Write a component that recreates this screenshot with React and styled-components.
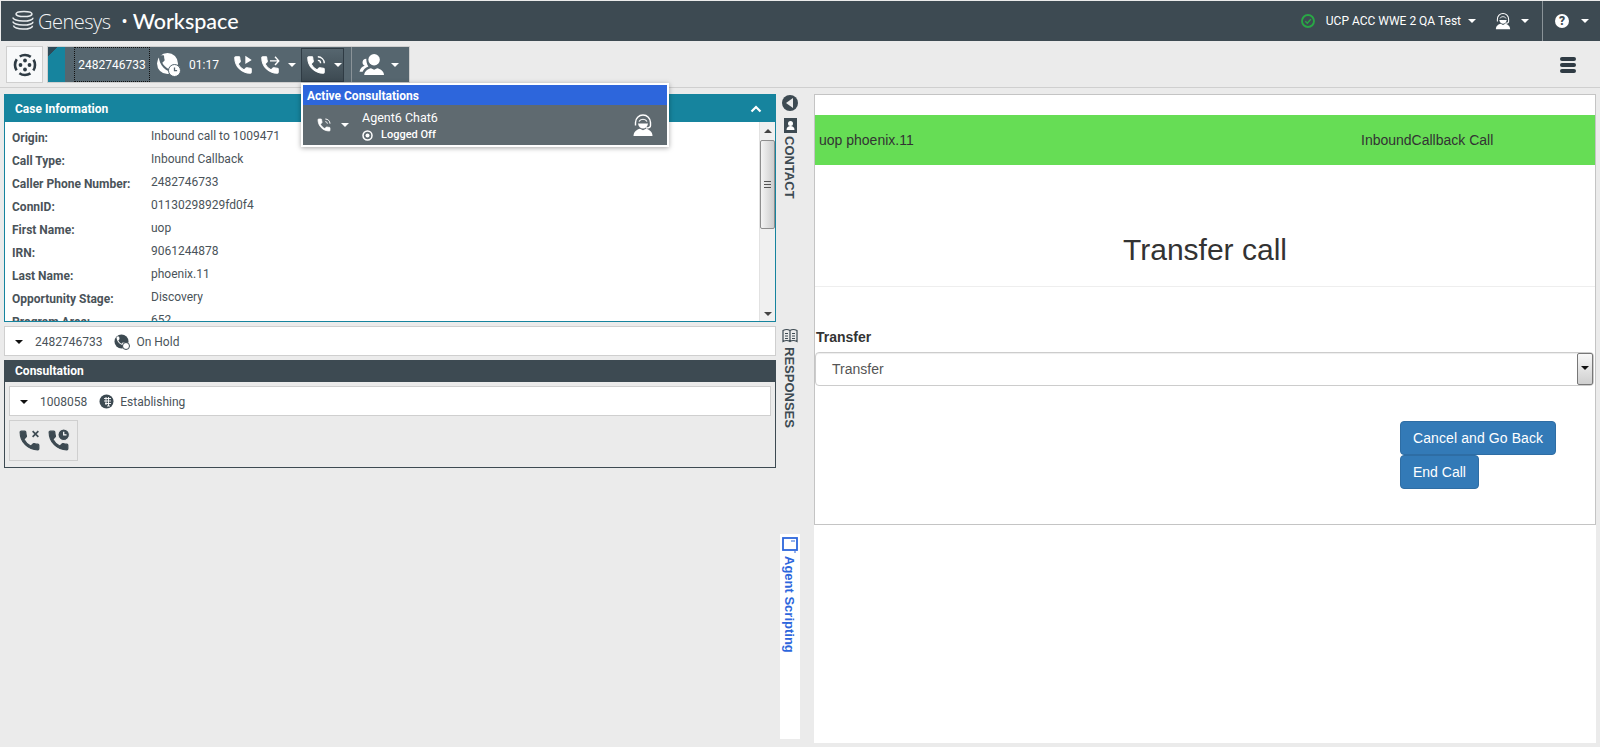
import styled, { createGlobalStyle } from 'styled-components'

const phonePath = 'M6.62 10.79c1.44 2.83 3.76 5.14 6.59 6.59l2.2-2.2c.27-.27.67-.36 1.02-.24 1.12.37 2.33.57 3.57.57.55 0 1 .45 1 1V20c0 .55-.45 1-1 1-9.39 0-17-7.61-17-17 0-.55.45-1 1-1h3.5c.55 0 1 .45 1 1 0 1.25.2 2.45.57 3.57.11.35.03.74-.25 1.02l-2.2 2.2z'

const caseData = [
  { id: 1, label: 'Origin:', value: 'Inbound call to 1009471' },
  { id: 2, label: 'Call Type:', value: 'Inbound Callback' },
  { id: 3, label: 'Caller Phone Number:', value: '2482746733' },
  { id: 4, label: 'ConnID:', value: '01130298929fd0f4' },
  { id: 5, label: 'First Name:', value: 'uop' },
  { id: 6, label: 'IRN:', value: '9061244878' },
  { id: 7, label: 'Last Name:', value: 'phoenix.11' },
  { id: 8, label: 'Opportunity Stage:', value: 'Discovery' },
  { id: 9, label: 'Program Area:', value: '652' },
]

function Svg({ size = 24, color = 'currentColor', children }) {
  return (
    <svg width={size} height={size} viewBox="0 0 24 24" fill={color} style={{ display: 'block', flex: 'none' }}>
      {children}
    </svg>
  )
}

// the handset is drawn a little fatter than the plain material one
function PhoneIcon({ size, color = '#fff', extra }) {
  return (
    <Svg size={size} color={color}>
      <path d={phonePath} stroke={color} strokeWidth="1.100" strokeLinejoin="round" />
      {extra}
    </Svg>
  )
}

function WavePhone({ size, color = '#fff' }) {
  return (
    <PhoneIcon
      size={size}
      color={color}
      extra={<path d="M14 3c3.900 0 7 3.100 7 7M14 7c1.700 0 3 1.300 3 3" fill="none" stroke={color} strokeWidth="1.500" />}
    />
  )
}

function AgentIcon({ size, color }) {
  return (
    <Svg size={size} color={color}>
      <path d="M2.500 23c0-4.500 3.500-6.500 6.500-7.200l3 1.400 3-1.400c3 .7 6.500 2.700 6.500 7.200z" />
      <path d="M7 10.500c.5 3.200 2.500 5 5 5s4.500-1.800 5-5z" />
      <path d="M4.500 12.500V9.500a7.500 7.500 0 0 1 15 0v3M19.500 12.500c0 1.800-2 2.500-4.500 2.500" fill="none" stroke={color} strokeWidth="1.400" />
      <path d="M8 8.500c1.500-3 6.500-3 8 0" fill="none" stroke={color} strokeWidth="1.200" />
    </Svg>
  )
}

function Logo() {
  return (
    <svg width="24" height="24" viewBox="0 0 24 24" fill="none" stroke="#e8ecee" strokeWidth="1.500" style={{ display: 'block' }}>
      <ellipse cx="13" cy="5" rx="8" ry="2.600" />
      <path d="M2 8.500c0 2 4.500 3.600 10 3.600s10-1.400 10-3.400" />
      <path d="M2 12.500c0 2 4.500 3.600 10 3.600s10-1.400 10-3.400" />
      <path d="M2.500 16.500c0 2 4.300 3.600 9.500 3.600s9.500-1.400 9.500-3.400" />
    </svg>
  )
}

function App() {
  return (
    <Page>
      <GlobalStyle />
      <Header>
        <Brand>
          <Logo />
          <BrandName>Genesys</BrandName>
          <BrandDot>•</BrandDot>
          <BrandProduct>Workspace</BrandProduct>
        </Brand>
        <HeaderRight>
          <svg width="14" height="14" viewBox="0 0 14 14" fill="none" style={{ display: 'block' }}>
            <circle cx="7" cy="7" r="6" stroke="#29a745" strokeWidth="1.900" />
            <path d="M4.300 7.200l2 2 3.500-4" stroke="#29a745" strokeWidth="1.400" />
          </svg>
          <StatusName>UCP ACC WWE 2 QA Test</StatusName>
          <Caret />
          <HeaderAgent>
            <AgentIcon size={18} color="#fff" />
            <Caret $gap={9} />
          </HeaderAgent>
          <HelpBlock>
            <HelpCircle>?</HelpCircle>
            <Caret $gap={12} />
          </HelpBlock>
        </HeaderRight>
      </Header>

      <Toolbar>
        <HomeButton>
          <svg width="24" height="24" viewBox="0 0 24 24" style={{ display: 'block' }}>
            <circle cx="12" cy="12" r="10" fill="none" stroke="#2f3b44" strokeWidth="2.600" strokeDasharray="11.700 4" strokeDashoffset="5.850" />
            <circle cx="12" cy="7.500" r="1.900" fill="#2f3b44" />
            <circle cx="12" cy="16.500" r="1.900" fill="#2f3b44" />
            <circle cx="7.500" cy="12" r="1.900" fill="#2f3b44" />
            <circle cx="16.500" cy="12" r="1.900" fill="#2f3b44" />
          </svg>
        </HomeButton>
        <CallBar>
          <CallStripe />
          <CallNumber>2482746733</CallNumber>
          <HoldBadge>
            <svg width="24" height="24" viewBox="0 0 24 24" style={{ display: 'block' }}>
              <circle cx="10.500" cy="10.500" r="10.500" fill="#fff" />
              <path d={phonePath} fill="#56666f" transform="translate(-1 -0.500) scale(0.95)" />
              <circle cx="17.500" cy="17.500" r="6" fill="#fff" stroke="#56666f" strokeWidth="1" />
              <path d="M17.500 14.500v3.200h2.600" fill="none" stroke="#56666f" strokeWidth="1.300" />
            </svg>
          </HoldBadge>
          <CallTime>01:17</CallTime>
          <BarIcon $ml={13}>
            <PhoneIcon size={22} extra={<path d="M14.500 2l7 4.500-7 4.500z" fill="#fff" />} />
          </BarIcon>
          <BarIcon $ml={5}>
            <PhoneIcon size={22} extra={<path d="M12 7.500h9M17.500 3l4 4.500-4 4.500" fill="none" stroke="#fff" strokeWidth="1.600" />} />
            <Caret />
          </BarIcon>
          <ActiveIcon>
            <WavePhone size={22} />
            <Caret />
          </ActiveIcon>
          <BarDivider />
          <BarIcon $ml={7}>
            <Svg size={25} color="#fff">
              <circle cx="14.500" cy="7.500" r="5.500" />
              <path d="M5 22c.3-4 4-6 6.500-6.500l3 1.500 3-1.500C20 16 24 18 24 22z" />
              <path d="M7 6.500a3.500 3.500 0 0 0-1.500 6.700C3 14 1 15.500.5 19h3c.8-2.500 2.500-4 5.500-5.200-1.500-2-2-4.800-2-7.300z" />
            </Svg>
            <Caret />
          </BarIcon>
        </CallBar>
        <MenuButton>
          <MenuLine />
          <MenuLine />
          <MenuLine />
        </MenuButton>
      </Toolbar>

      <ConsultMenu>
        <ConsultTitle>Active Consultations</ConsultTitle>
        <ConsultBody>
          <WavePhone size={16} />
          <Caret $gap={9} />
          <ConsultText>
            <ConsultName>Agent6 Chat6</ConsultName>
            <ConsultStatus>
              <svg width="11" height="11" viewBox="0 0 11 11" style={{ display: 'block' }}>
                <circle cx="5.500" cy="5.500" r="4.500" fill="none" stroke="#fff" strokeWidth="1.500" />
                <circle cx="5.500" cy="5.500" r="2" fill="#fff" />
              </svg>
              Logged Off
            </ConsultStatus>
          </ConsultText>
          <ConsultAgent>
            <AgentIcon size={24} color="#fff" />
          </ConsultAgent>
        </ConsultBody>
      </ConsultMenu>

      <Main>
        <LeftColumn>
          <CasePanel>
            <CaseHeader>
              Case Information
              <svg width="12" height="8" viewBox="0 0 12 8" style={{ display: 'block' }}>
                <path d="M1.500 6.500L6 2l4.500 4.500" fill="none" stroke="#fff" strokeWidth="2.200" />
              </svg>
            </CaseHeader>
            <CaseBody>
              <CaseList>
                {caseData.map(function (item) {
                  return (
                    <CaseRow key={item.id}>
                      <CaseLabel>{item.label}</CaseLabel>
                      <CaseValue>{item.value}</CaseValue>
                    </CaseRow>
                  )
                })}
              </CaseList>
              <ScrollTrack>
                <ScrollArrow $up />
                <ScrollThumb>
                  <ThumbGrip />
                </ScrollThumb>
                <ScrollArrow />
              </ScrollTrack>
            </CaseBody>
          </CasePanel>

          <PartyRow>
            <SmallCaret />
            <PartyNumber>2482746733</PartyNumber>
            <svg width="16" height="16" viewBox="0 0 16 16" style={{ display: 'block' }}>
              <circle cx="7.500" cy="7.500" r="7" fill="#3d4a52" />
              <path d={phonePath} fill="#fff" transform="translate(1 1) scale(0.5)" />
              <circle cx="12" cy="12" r="3.500" fill="#fff" stroke="#3d4a52" />
            </svg>
            <PartyStatus>On Hold</PartyStatus>
          </PartyRow>

          <ConsultPanel>
            <ConsultHeader>Consultation</ConsultHeader>
            <ConsultInner>
              <PartyRow>
                <SmallCaret />
                <PartyNumber>1008058</PartyNumber>
                <svg width="15" height="15" viewBox="0 0 15 15" style={{ display: 'block' }}>
                  <circle cx="7.500" cy="7.500" r="7" fill="#3d4a52" />
                  <path d="M5 4.500h7M5 7h7M6 9.500h6M8 12h3M7 3v8M9.500 3v9" stroke="#fff" strokeWidth="0.900" />
                </svg>
                <PartyStatus>Establishing</PartyStatus>
              </PartyRow>
              <ActionGroup>
                <PhoneIcon
                  size={25}
                  color="#3d4a52"
                  extra={<path d="M15 3l5.500 5.500M20.500 3L15 8.500" fill="none" stroke="#3d4a52" strokeWidth="1.600" />}
                />
                <PhoneIcon
                  size={25}
                  color="#3d4a52"
                  extra={
                    <>
                      <circle cx="17" cy="6.500" r="5.500" fill="#3d4a52" stroke="#ebebeb" />
                      <path d="M17 3.500v3.200h2.700" fill="none" stroke="#fff" strokeWidth="1.200" />
                    </>
                  }
                />
              </ActionGroup>
            </ConsultInner>
          </ConsultPanel>
        </LeftColumn>

        <SideTabs>
          <CollapseButton>
            <svg width="8" height="10" viewBox="0 0 8 10" style={{ display: 'block' }}>
              <path d="M7 0v10L0 5z" fill="#ebebeb" />
            </svg>
          </CollapseButton>
          <SideTab $top={7}>
            <svg width="14" height="15" viewBox="0 0 14 15" style={{ display: 'block' }}>
              <rect x="1" y="0" width="13" height="15" fill="#3d4a52" />
              <circle cx="7.500" cy="5.500" r="2.500" fill="#fff" />
              <path d="M3.500 12c0-3 2-4 4-4s4 1 4 4z" fill="#fff" />
            </svg>
            <SideLabel>CONTACT</SideLabel>
          </SideTab>
          <SideTab $top={129}>
            <svg width="16" height="16" viewBox="0 0 16 16" fill="none" stroke="#3d4a52" strokeWidth="1.200" style={{ display: 'block' }}>
              <path d="M1 2.500c2.500-1.300 5-1.300 7 0 2-1.300 4.500-1.300 7 0v11c-2.500-1.300-5-1.300-7 0-2-1.300-4.500-1.300-7 0zM8 2.500v11M3 5.500h3M3 8h3M3 10.500h3M10 5.500h3M10 8h3M10 10.500h3" />
            </svg>
            <SideLabel>RESPONSES</SideLabel>
          </SideTab>
          <ScriptTab>
            <svg width="16" height="16" viewBox="0 0 16 16" fill="none" stroke="#2d66dc" style={{ display: 'block' }}>
              <rect x="1" y="1" width="14" height="12" strokeWidth="1.800" />
              <path d="M9 4h4M12 15h2" strokeWidth="1.200" />
            </svg>
            <SideLabel $blue>Agent Scripting</SideLabel>
          </ScriptTab>
        </SideTabs>

        <RightColumn>
          <FormFrame>
            <GreenBar>
              <GreenName>uop phoenix.11</GreenName>
              <GreenType>InboundCallback Call</GreenType>
            </GreenBar>
            <PageTitle>Transfer call</PageTitle>
            <FormBody>
              <FieldLabel>Transfer</FieldLabel>
              <SelectBox>
                <SelectText>Transfer</SelectText>
                <SelectArrow />
              </SelectBox>
              <Buttons>
                <BlueButton $spaced>Cancel and Go Back</BlueButton>
                <BlueButton>End Call</BlueButton>
              </Buttons>
            </FormBody>
          </FormFrame>
        </RightColumn>
      </Main>
    </Page>
  )
}

const GlobalStyle = createGlobalStyle`
  * {
    box-sizing: border-box;
  }
  body {
    margin: 0;
    background: #ebebeb;
    font-family: Roboto, "Liberation Sans", sans-serif;
    overflow: hidden;
  }
`

const Page = styled.div`
  position: relative;
  height: 747px;
  padding-top: 1px;
  display: flex;
  flex-direction: column;
  background: #ebebeb;
`

const Header = styled.header`
  height: 40px;
  margin-left: 1px;
  background: #3d4a52;
  display: flex;
  align-items: center;
  justify-content: space-between;
  color: #fff;
`

const Brand = styled.div`
  display: flex;
  align-items: center;
  padding-left: 10px;
`

const BrandName = styled.span`
  font-family: "Open Sans", sans-serif;
  font-size: 20px;
  font-weight: 300;
  letter-spacing: -0.5px;
  margin-left: 3px;
  color: #f4f6f7;
`

const BrandDot = styled.span`
  font-size: 18px;
  margin-left: 11px;
`

const BrandProduct = styled.span`
  font-family: Lato, sans-serif;
  font-size: 21.500px;
  font-weight: 500;
  margin-left: 5px;
`

const HeaderRight = styled.div`
  display: flex;
  align-items: center;
  height: 100%;
`

const StatusName = styled.span`
  font-size: 12px;
  margin-left: 11px;
`

const Caret = styled.span`
  display: inline-block;
  flex: none;
  width: 0;
  height: 0;
  margin-left: ${(p) => p.$gap || 7}px;
  border-left: 4px solid transparent;
  border-right: 4px solid transparent;
  border-top: 4px solid #fff;
`

const HeaderAgent = styled.div`
  display: flex;
  align-items: center;
  margin-left: 18px;
  margin-right: 13px;
`

const HelpBlock = styled.div`
  display: flex;
  align-items: center;
  height: 100%;
  width: 58px;
  padding-left: 12px;
  border-left: 1px solid #8a9398;
`

const HelpCircle = styled.span`
  width: 14px;
  height: 14px;
  border-radius: 50%;
  background: #fff;
  color: #3d4a52;
  font-size: 12px;
  font-weight: 900;
  line-height: 14px;
  text-align: center;
`

const Toolbar = styled.div`
  height: 47px;
  flex: none;
  display: flex;
  align-items: center;
  padding: 1px 24px 0 6px;
  border-bottom: 1px solid #cfcfcf;
`

const HomeButton = styled.div`
  width: 37px;
  height: 37px;
  background: #f8f9fa;
  border: 1px solid #cfcfcf;
  display: flex;
  align-items: center;
  justify-content: center;
`

const CallBar = styled.div`
  width: 363px;
  height: 37px;
  margin-left: 4px;
  background: #56666f;
  border: 1px solid #cfcfcf;
  display: flex;
  align-items: center;
  color: #fff;
`

const CallStripe = styled.div`
  width: 17px;
  height: 100%;
  flex: none;
  background: linear-gradient(135deg, #2f4a58 0 7px, #16849e 7px);
`

const CallNumber = styled.div`
  height: 35px;
  width: 76px;
  flex: none;
  margin-left: 9px;
  border: 1px dotted #111;
  display: flex;
  align-items: center;
  justify-content: center;
  font-size: 12px;
`

const HoldBadge = styled.div`
  margin-left: 7px;
`

const CallTime = styled.span`
  font-size: 12px;
  margin-left: 8px;
`

const BarIcon = styled.div`
  display: flex;
  align-items: center;
  margin-left: ${(p) => p.$ml}px;
`

const ActiveIcon = styled.div`
  display: flex;
  align-items: center;
  flex: none;
  width: 43px;
  height: 34px;
  margin-left: 5px;
  padding-left: 3px;
  border: 1px solid #2f3b44;
  background: linear-gradient(#56666f, #3d4a52);
`

const BarDivider = styled.div`
  width: 1px;
  height: 100%;
  flex: none;
  margin-left: 7px;
  background: #8a9398;
`

const MenuButton = styled.div`
  margin-left: auto;
  display: flex;
  flex-direction: column;
  gap: 2px;
  width: 16px;
`

const MenuLine = styled.div`
  height: 4px;
  border-radius: 2px;
  background: #2f3b44;
`

const ConsultMenu = styled.div`
  position: absolute;
  left: 301px;
  top: 83px;
  width: 368px;
  border: 2px solid #fff;
  box-shadow: 0 1px 5px rgba(0, 0, 0, 0.35);
  z-index: 5;
`

const ConsultTitle = styled.div`
  height: 20px;
  padding-left: 4px;
  background: #2d66dc;
  color: #fff;
  font-size: 12px;
  font-weight: 700;
  line-height: 22px;
`

const ConsultBody = styled.div`
  height: 40px;
  padding: 0 12px 0 13px;
  background: #5f6a70;
  color: #fff;
  display: flex;
  align-items: center;
`

const ConsultText = styled.div`
  margin-left: 13px;
  padding-top: 2px;
`

const ConsultName = styled.div`
  font-size: 12.500px;
  line-height: 18px;
`

const ConsultStatus = styled.div`
  display: flex;
  align-items: center;
  gap: 8px;
  font-size: 11px;
  font-weight: 500;
  line-height: 16px;
`

const ConsultAgent = styled.div`
  margin-left: auto;
`

const Main = styled.main`
  flex: 1;
  display: flex;
  padding: 6px 4px 4px 4px;
`

const LeftColumn = styled.div`
  width: 772px;
  flex: none;
  display: flex;
  flex-direction: column;
  gap: 4px;
`

const CasePanel = styled.section`
  height: 228px;
  flex: none;
  display: flex;
  flex-direction: column;
  border: 1px solid #16849e;
`

const CaseHeader = styled.div`
  height: 27px;
  flex: none;
  padding: 0 13px 0 10px;
  background: #16849e;
  color: #fff;
  font-size: 12px;
  font-weight: 700;
  display: flex;
  align-items: center;
  justify-content: space-between;
`

const CaseBody = styled.div`
  flex: 1;
  min-height: 0;
  background: #fff;
  display: flex;
`

const CaseList = styled.div`
  flex: 1;
  overflow: hidden;
  padding: 2px 7px 0;
`

const CaseRow = styled.div`
  height: 23px;
  display: flex;
  align-items: center;
  font-size: 12px;
  color: #4a5359;
`

const CaseLabel = styled.span`
  width: 139px;
  font-weight: 700;
  position: relative;
  top: 2px;
`

const CaseValue = styled.span``

const ScrollTrack = styled.div`
  width: 16px;
  flex: none;
  background: #f0f0f0;
  border-left: 1px solid #e2e2e2;
  display: flex;
  flex-direction: column;
  align-items: center;
  padding: 7px 0 5px;
`

const ScrollArrow = styled.div`
  width: 0;
  height: 0;
  border-left: 4px solid transparent;
  border-right: 4px solid transparent;
  ${(p) => (p.$up ? 'border-bottom: 4px solid #444;' : 'border-top: 4px solid #444; margin-top: auto;')}
`

const ScrollThumb = styled.div`
  width: 15px;
  height: 89px;
  margin-top: 7px;
  border: 1px solid #8e8e8e;
  border-radius: 2px;
  background: linear-gradient(90deg, #f4f4f4, #cdcdcd);
  display: flex;
  align-items: center;
  justify-content: center;
`

const ThumbGrip = styled.div`
  width: 7px;
  height: 7px;
  background: repeating-linear-gradient(#555 0 1px, transparent 1px 3px);
`

const PartyRow = styled.div`
  height: 30px;
  flex: none;
  background: #fff;
  border: 1px solid #cfcfcf;
  display: flex;
  align-items: center;
  padding: 1px 0 0 10px;
  font-size: 12px;
  color: #4a5359;
`

const SmallCaret = styled.span`
  width: 0;
  height: 0;
  border-left: 4px solid transparent;
  border-right: 4px solid transparent;
  border-top: 4px solid #111;
`

const PartyNumber = styled.span`
  margin: 0 12px;
`

const PartyStatus = styled.span`
  margin-left: 6px;
`

const ConsultPanel = styled.section`
  height: 108px;
  flex: none;
  border: 1px solid #3d4a52;
`

const ConsultHeader = styled.div`
  height: 21px;
  padding-left: 10px;
  background: #3d4a52;
  color: #fff;
  font-size: 12px;
  font-weight: 700;
  line-height: 21px;
`

const ConsultInner = styled.div`
  padding: 4px 4px 0;
`

const ActionGroup = styled.div`
  width: 69px;
  height: 41px;
  margin-top: 4px;
  border: 1px solid #cfcfcf;
  display: flex;
  align-items: center;
  justify-content: center;
  gap: 4px;
`

const SideTabs = styled.nav`
  width: 38px;
  flex: none;
  padding: 1px 14px 4px 4px;
  display: flex;
  flex-direction: column;
  align-items: center;
`

const CollapseButton = styled.div`
  width: 16px;
  height: 16px;
  flex: none;
  border-radius: 50%;
  background: #3d4a52;
  display: flex;
  align-items: center;
  justify-content: center;
`

const SideTab = styled.div`
  width: 20px;
  flex: none;
  margin-top: ${(p) => p.$top}px;
  display: flex;
  flex-direction: column;
  align-items: center;
  gap: 3px;
`

const ScriptTab = styled(SideTab)`
  flex: 1;
  margin-top: 106px;
  padding-top: 3px;
  background: #fff;
`

const SideLabel = styled.span`
  writing-mode: vertical-rl;
  font-family: "Liberation Sans", sans-serif;
  font-size: 13px;
  font-weight: 700;
  line-height: 14px;
  margin-right: 3px;
  color: ${(p) => (p.$blue ? '#2d66dc' : '#3d4a52')};
`

const RightColumn = styled.div`
  flex: 1;
  background: #fff;
  font-family: "Liberation Sans", sans-serif;
`

const FormFrame = styled.div`
  height: 431px;
  padding-top: 20px;
  border: 1px solid #c4c4c4;
`

const GreenBar = styled.div`
  height: 50px;
  padding-left: 4px;
  background: #66dd55;
  display: flex;
  align-items: center;
  font-size: 14px;
  color: #333;
`

const GreenName = styled.span`
  width: 542px;
`

const GreenType = styled.span``

const PageTitle = styled.h1`
  height: 122px;
  margin: 0;
  padding-top: 68px;
  border-bottom: 1px solid #eee;
  font-size: 30px;
  font-weight: 400;
  line-height: 33px;
  text-align: center;
  color: #333;
`

const FormBody = styled.div``

const FieldLabel = styled.div`
  margin-top: 42px;
  padding-left: 1px;
  font-size: 14px;
  font-weight: 700;
  line-height: 16px;
  color: #333;
`

const SelectBox = styled.div`
  height: 34px;
  margin: 7px 1px 0 0;
  border: 1px solid #ccc;
  border-radius: 4px;
  display: flex;
  align-items: center;
  justify-content: space-between;
  padding: 0 0 0 16px;
  box-shadow: inset 0 1px 1px rgba(0, 0, 0, 0.075);
`

const SelectText = styled.span`
  font-size: 14px;
  color: #555;
`

const SelectArrow = styled.div`
  width: 16px;
  height: 32px;
  border: 1px solid #777;
  border-radius: 2px;
  background: linear-gradient(#f8f8f8, #cfcfcf);
  position: relative;

  &::after {
    content: '';
    position: absolute;
    left: 3px;
    top: 12px;
    border-left: 4px solid transparent;
    border-right: 4px solid transparent;
    border-top: 4px solid #111;
  }
`

const Buttons = styled.div`
  margin: 35px 0 0 585px;
  display: flex;
  flex-direction: column;
  align-items: flex-start;
`

const BlueButton = styled.button`
  height: 34px;
  padding: 0 12px;
  border: 1px solid #2e6da4;
  border-radius: 4px;
  background: #337ab7;
  color: #fff;
  font-family: "Liberation Sans", sans-serif;
  font-size: 14px;
  letter-spacing: ${(p) => (p.$spaced ? '0.1px' : '0')};
`

export default App
